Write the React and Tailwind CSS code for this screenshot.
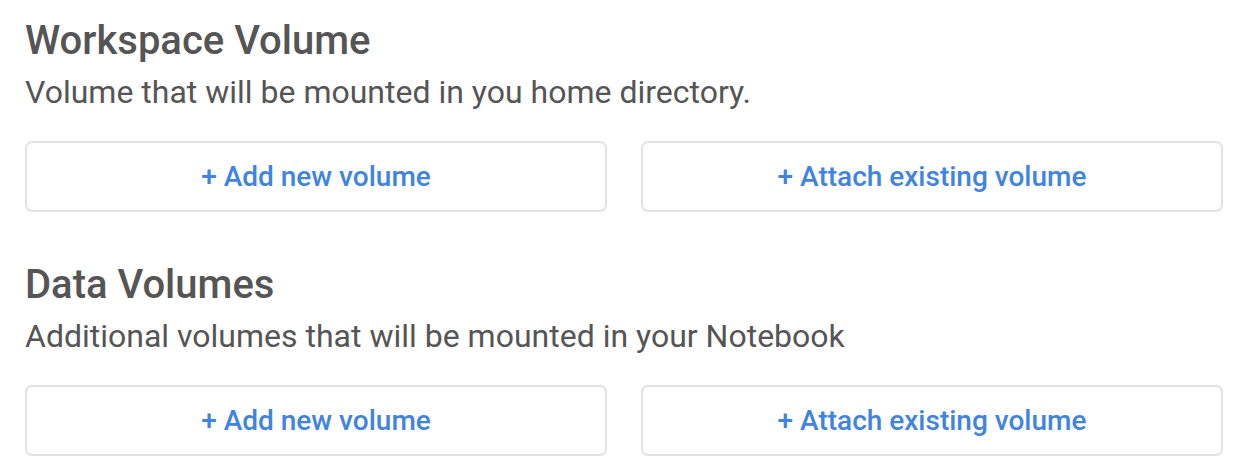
import React from 'react';

function VolumeSection({ title, subtitle }) {
  return (
    <section className="mb-[53px]">
      <h2 className="text-[40px] leading-[40px] font-medium text-[#555555]">{title}</h2>
      <p className="text-[32px] leading-[32px] text-[#555555] mt-[15px]">{subtitle}</p>
      <div className="grid grid-cols-2 gap-[34px] mt-[33px]">
        <button className="h-[71px] rounded-[7px] border-2 border-[#e2e2e2] bg-white text-[28px] font-medium text-[#3f84e0]">
          + Add new volume
        </button>
        <button className="h-[71px] rounded-[7px] border-2 border-[#e2e2e2] bg-white text-[28px] font-medium text-[#3f84e0]">
          + Attach existing volume
        </button>
      </div>
    </section>
  );
}

export default function App() {
  return (
    <div className="w-[1246px] h-[470px] bg-white pl-[25px] pr-[23px] pt-[21px] overflow-hidden" style={{ fontFamily: 'Roboto, "Noto Sans", sans-serif' }}>
      <VolumeSection title="Workspace Volume" subtitle="Volume that will be mounted in you home directory." />
      <VolumeSection title="Data Volumes" subtitle="Additional volumes that will be mounted in your Notebook" />
    </div>
  );
}
